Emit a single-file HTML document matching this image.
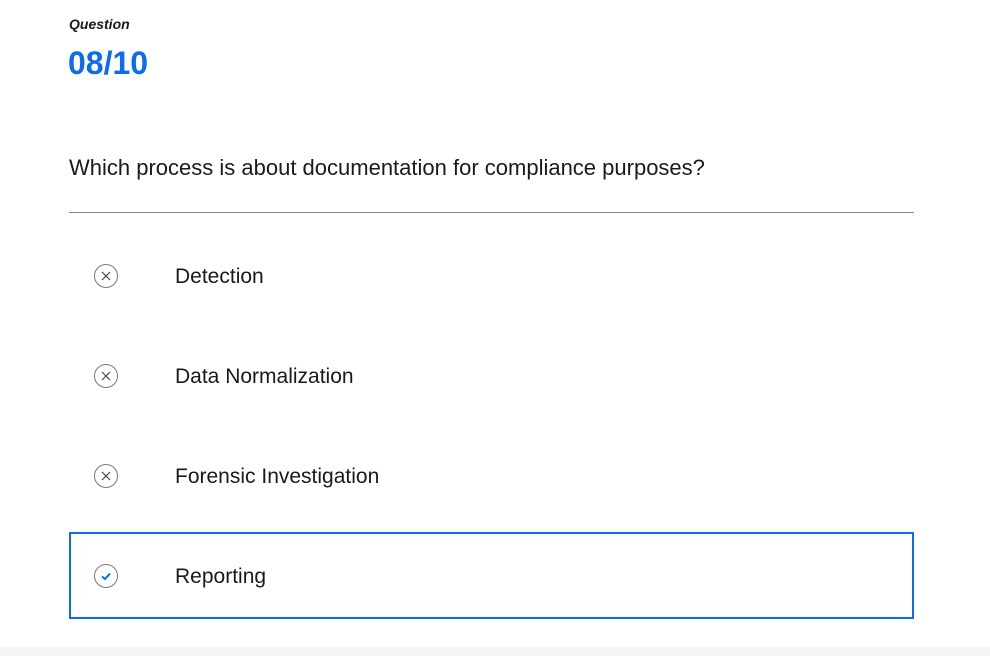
<!DOCTYPE html>
<html><head><style>
body{margin:0;width:990px;height:656px;background:#fff;font-family:"Liberation Sans",sans-serif;color:#1a1a1a;position:relative;overflow:hidden}
.a{position:absolute}
.q{left:69px;top:16px;font-size:14px;font-style:italic;font-weight:bold}
.n{left:68px;top:45px;font-size:32px;font-weight:bold;color:#0a6cf0}
.t{left:69px;top:155px;font-size:22px}
.hr{left:69px;top:212px;width:845px;height:1px;background:#8a8a8a}
.o{font-size:21px;left:175px}
.c{left:94px;width:22px;height:22px;border:1px solid #777;border-radius:50%}
.box{left:69px;top:532px;width:841px;height:83px;border:2px solid #0a6cf0}
.foot{left:0;top:647px;width:990px;height:9px;background:#f5f5f5}
</style></head><body>
<div class="a q">Question</div>
<div class="a n">08/10</div>
<div class="a t">Which process is about documentation for compliance purposes?</div>
<div class="a hr"></div>
<div class="a c" style="top:264px"><svg width="22" height="22"><path d="M7 7L15 15M15 7L7 15" stroke="#444" stroke-width="1.2"/></svg></div>
<div class="a o" style="top:265px">Detection</div>
<div class="a c" style="top:364px"><svg width="22" height="22"><path d="M7 7L15 15M15 7L7 15" stroke="#444" stroke-width="1.2"/></svg></div>
<div class="a o" style="top:365px">Data Normalization</div>
<div class="a c" style="top:464px"><svg width="22" height="22"><path d="M7 7L15 15M15 7L7 15" stroke="#444" stroke-width="1.2"/></svg></div>
<div class="a o" style="top:465px">Forensic Investigation</div>
<div class="a box"></div>
<div class="a c" style="top:564px"><svg width="22" height="22"><path d="M7 11.5L10 14L15 8.5" stroke="#0a6cf0" stroke-width="2" fill="none"/></svg></div>
<div class="a o" style="top:565px">Reporting</div>
<div class="a foot"></div>
</body></html>
